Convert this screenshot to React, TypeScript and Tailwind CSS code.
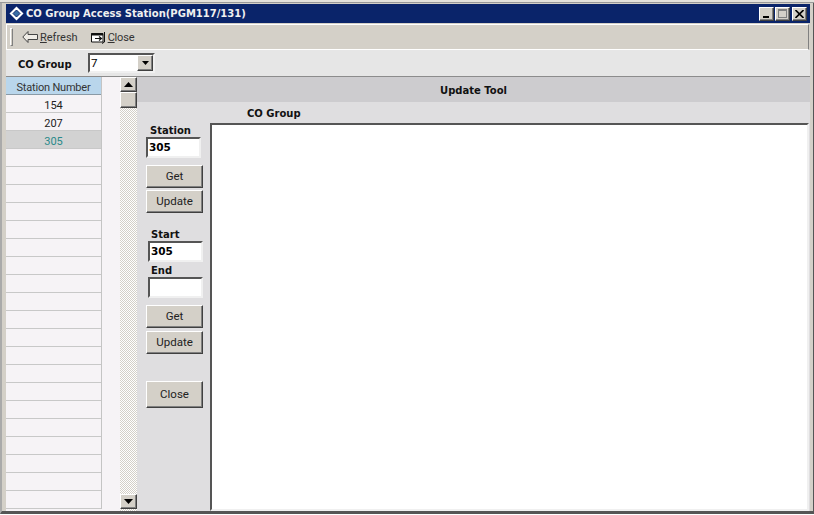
import React from "react";

const raised = "border border-t-white border-l-white border-r-[#404040] border-b-[#404040] shadow-[inset_-1px_-1px_0_#808080]";
const sunken = "border-2 border-t-[#555555] border-l-[#555555] border-r-[#f0f0f0] border-b-[#f0f0f0]";
const uiFont = "font-['Roboto','Liberation_Sans',sans-serif]";
const boldFont = "font-['DejaVu_Sans','Liberation_Sans',sans-serif] font-bold";

function PanelButton({ label, h, mt }: { label: string; h: string; mt: string }) {
  return (
    <div className={`${h} ${mt} w-[57px] bg-[#d4d0c8] ${raised} flex items-center justify-center text-[11.5px] text-[#222] ${uiFont}`}>
      {label}
    </div>
  );
}

function Field({ value, w, h, ml, mt }: { value: string; w: string; h: string; ml: string; mt: string }) {
  return (
    <div className={`${w} ${h} ${ml} ${mt} bg-white ${sunken} flex items-center pl-[1px] text-[10.5px] leading-none text-black ${boldFont}`}>
      {value}
    </div>
  );
}

function Label({ text, ml, mt }: { text: string; ml: string; mt: string }) {
  return <div className={`${ml} ${mt} h-[12px] flex items-center text-[10px] text-[#111] ${boldFont}`}>{text}</div>;
}

function WinBtn({ children, ml }: { children: React.ReactNode; ml: string }) {
  return (
    <div className={`w-[15px] h-[14px] ${ml} bg-[#d4d0c8] ${raised} flex items-center justify-center`}>{children}</div>
  );
}

function Arrow({ up }: { up?: boolean }) {
  return (
    <svg width="9" height="5" viewBox="0 0 9 5">
      <path d={up ? "M4.5 0 L9 5 L0 5 Z" : "M0 0 L9 0 L4.5 5 Z"} fill="#000" />
    </svg>
  );
}

const rows = ["154", "207", "305", ...Array.from({ length: 20 }, () => "")];

export default function App() {
  return (
    <div className="w-[814px] h-[515px] overflow-hidden bg-white flex flex-col">
      <div className="h-[3px] bg-[#e4e2dc] border-b border-[#999]" />
      <div className="flex-1 min-h-0 bg-[#d4d0c8] pl-[5px] pr-[3px] pt-[1px] flex flex-col border-r border-[#555] border-l-2 border-l-[#aaa] border-b-[3px] border-b-[#555] mb-[1px]">
        {/* title bar */}
        <div className="h-[19px] shrink-0 -ml-[1px] bg-[#0a246a] flex items-center pl-[3px] pr-[3px]">
          <svg width="15" height="15" viewBox="0 0 15 15" className="shrink-0">
            <path d="M7.5 0.5 L14.5 7.5 L7.5 14.5 L0.5 7.5 Z" fill="#fff" />
            <path d="M7.5 4 L11 7.5 L7.5 11 L4 7.5 Z" fill="#3a6ea5" stroke="#0a246a" strokeWidth="1" />
          </svg>
          <div className={`ml-[2px] text-[10px] text-[#f0f0f0] whitespace-nowrap ${boldFont}`}>CO Group Access Station(PGM117/131)</div>
          <div className="flex-1" />
          <WinBtn ml="">
            <div className="w-[6px] h-[2px] bg-black mt-[7px] -ml-[2px]" />
          </WinBtn>
          <WinBtn ml="ml-[1px]">
            <div className="w-[9px] h-[9px] border border-[#808080] border-t-2" />
          </WinBtn>
          <WinBtn ml="ml-[2px]">
            <svg width="9" height="8" viewBox="0 0 9 8">
              <path d="M0.5 0 L8.5 8 M8.5 0 L0.5 8" stroke="#000" strokeWidth="1.6" />
            </svg>
          </WinBtn>
        </div>

        {/* toolbar */}
        <div className="h-[26px] shrink-0 -ml-[1px] mr-[1px] mt-[1px] bg-[#d4d0c8] border border-t-white border-l-white border-r-[#808080] border-b-white flex items-center pl-[3px] text-[11px] text-[#333]">
          <div className="w-[3px] h-[18px] border border-t-white border-l-white border-r-[#808080] border-b-[#808080]" />
          <svg width="16" height="12" viewBox="0 0 16 12" className="ml-[9px]">
            <path d="M6 0.5 L0.8 6 L6 11.5 L6 8.5 L15.5 8.5 L15.5 3.5 L6 3.5 Z" fill="#efece6" stroke="#444" />
          </svg>
          <span className={`ml-[2px] pt-[3px] ${uiFont}`}><span className="underline">R</span>efresh</span>
          <svg width="16" height="13" viewBox="0 0 16 13" className="ml-[13px]">
            <path d="M0.5 2.5 H12 V11 H0.5 Z" fill="#fff" stroke="#111" />
            <path d="M0.5 2 H12 V4.5 H0.5 Z" fill="#111" />
            <path d="M4 7.5 H10 M8 5.5 L10.5 7.5 L8 9.5" stroke="#111" strokeWidth="1.2" fill="none" />
            <path d="M13.5 1 V11 L11 12.5" stroke="#111" fill="none" />
          </svg>
          <span className={`ml-[1px] pt-[3px] tracking-[-0.2px] ${uiFont}`}><span className="underline">C</span>lose</span>
        </div>

        {/* CO Group bar */}
        <div className="h-[27px] shrink-0 -ml-[1px] bg-[#e6e6e6] flex items-center border-b border-[#8c8c8c]">
          <div className={`ml-[12px] w-[70px] pt-[3px] text-[10px] text-[#111] ${boldFont}`}>CO Group</div>
          <div className={`w-[67px] h-[20px] bg-white ${sunken} flex items-center justify-between pl-[1px] text-[11.5px] text-black ${uiFont}`}>
            <span className="pt-[1px]">7</span>
            <div className={`w-[16px] h-[16px] bg-[#d4d0c8] ${raised} flex items-center justify-center`}>
              <svg width="7" height="4" viewBox="0 0 7 4"><path d="M0 0 H7 L3.5 4 Z" fill="#000" /></svg>
            </div>
          </div>
        </div>

        {/* main */}
        <div className="flex-1 min-h-0 -ml-[1px] flex overflow-hidden">
          {/* list */}
          <div className="w-[114px] shrink-0 bg-[#f6f3f6] overflow-hidden">
            <div className="w-[96px] border-r border-[#c4c4c4]">
              <div className={`h-[18px] pt-[6px] bg-[#b9d6ec] border-b border-[#8a9aa6] flex items-center justify-center text-[11px] tracking-[-0.2px] text-[#333] ${uiFont}`}>Station Number</div>
              {rows.map((r, i) => (
                <div
                  key={i}
                  className={`h-[18px] pt-[6px] border-b border-[#c8c8c8] flex items-center justify-center text-[11px] ${uiFont} ${r === "305" ? "bg-[#d2d2d2] text-[#2a8a8a]" : "text-[#222]"}`}
                >
                  {r}
                </div>
              ))}
            </div>
          </div>

          {/* scrollbar */}
          <div className="w-[17px] shrink-0 flex flex-col bg-[repeating-conic-gradient(#d4d0c8_0%_25%,#ffffff_0%_50%)] bg-[length:2px_2px]">
            <div className={`h-[15px] shrink-0 bg-[#d4d0c8] ${raised} flex items-center justify-center`}><Arrow up /></div>
            <div className={`h-[16px] shrink-0 bg-[#d4d0c8] ${raised}`} />
            <div className="flex-1" />
            <div className={`h-[15px] shrink-0 bg-[#d4d0c8] ${raised} flex items-center justify-center mb-[2px]`}><Arrow /></div>
          </div>

          {/* panel */}
          <div className="flex-1 min-w-0 flex flex-col bg-[#dfdee0]">
            <div className={`h-[25px] shrink-0 pt-[2px] bg-[#cdcccf] flex items-center justify-center text-[10px] text-[#111] ${boldFont}`}>Update Tool</div>
            <div className="flex-1 min-h-0 flex">
              <div className="w-[73px] shrink-0 flex flex-col">
                <Label text="Station" ml="ml-[13px]" mt="mt-[22px]" />
                <Field value="305" w="w-[55px]" h="h-[21px]" ml="ml-[9px]" mt="mt-[1px]" />
                <div className="ml-[9px] flex flex-col">
                  <PanelButton label="Get" h="h-[23px]" mt="mt-[7px]" />
                  <PanelButton label="Update" h="h-[23px]" mt="mt-[2px]" />
                </div>
                <Label text="Start" ml="ml-[14px]" mt="mt-[15px]" />
                <Field value="305" w="w-[55px]" h="h-[21px]" ml="ml-[11px]" mt="mt-[1px]" />
                <Label text="End" ml="ml-[14px]" mt="mt-[2px]" />
                <Field value="" w="w-[55px]" h="h-[21px]" ml="ml-[11px]" mt="mt-[1px]" />
                <div className="ml-[9px] flex flex-col">
                  <PanelButton label="Get" h="h-[23px]" mt="mt-[7px]" />
                  <PanelButton label="Update" h="h-[23px]" mt="mt-[3px]" />
                  <PanelButton label="Close" h="h-[27px]" mt="mt-[27px]" />
                </div>
              </div>
              <div className="flex-1 min-w-0 flex flex-col mr-[1px]">
                <div className={`h-[21px] shrink-0 pl-[37px] pt-[2px] flex items-center text-[10px] text-[#111] ${boldFont}`}>CO Group</div>
                <div className="flex-1 min-h-0 bg-white border-2 border-t-[#555555] border-l-[#555555] border-r-[#f0f0f0] border-b-[#f0f0f0]" />
              </div>
            </div>
          </div>
        </div>
      </div>
    </div>
  );
}
